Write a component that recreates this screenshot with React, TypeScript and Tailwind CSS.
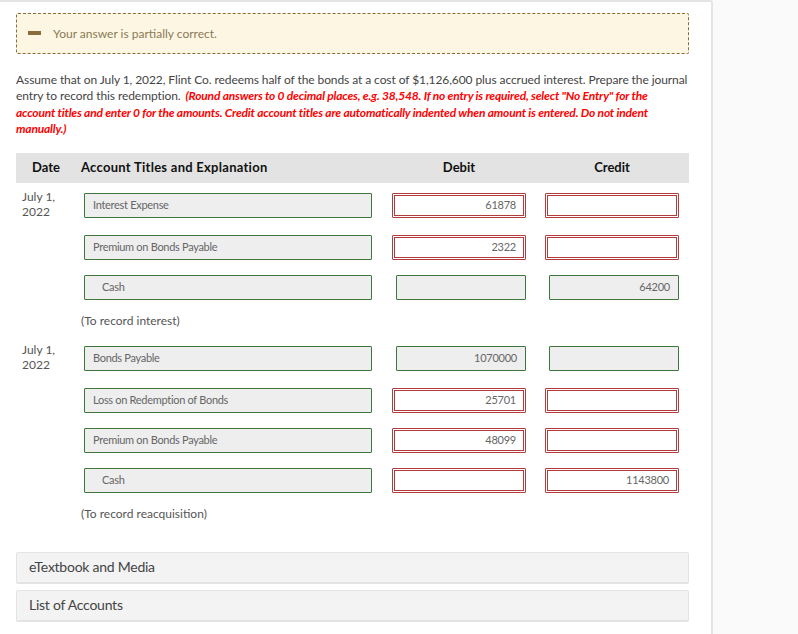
// Journal entry answer review for a partially correct question.
const lato = "font-['Lato','Noto_Sans',sans-serif]"

type Cell = { value?: string; state: 'ok' | 'bad' }

interface Row {
  date?: boolean
  account: string
  indent?: boolean
  debit: Cell
  credit: Cell
  top: string
}

const firstEntry: Row[] = [
  { date: true, account: 'Interest Expense', debit: { value: '61878', state: 'bad' }, credit: { state: 'bad' }, top: 'mt-[10px]' },
  { account: 'Premium on Bonds Payable', debit: { value: '2322', state: 'bad' }, credit: { state: 'bad' }, top: 'mt-[17px]' },
  { account: 'Cash', indent: true, debit: { state: 'ok' }, credit: { value: '64200', state: 'ok' }, top: 'mt-[15px]' },
]

const secondEntry: Row[] = [
  { date: true, account: 'Bonds Payable', debit: { value: '1070000', state: 'ok' }, credit: { state: 'ok' }, top: 'mt-[18px]' },
  { account: 'Loss on Redemption of Bonds', debit: { value: '25701', state: 'bad' }, credit: { state: 'bad' }, top: 'mt-[17px]' },
  { account: 'Premium on Bonds Payable', debit: { value: '48099', state: 'bad' }, credit: { state: 'bad' }, top: 'mt-[15px]' },
  { account: 'Cash', indent: true, debit: { state: 'bad' }, credit: { value: '1143800', state: 'bad' }, top: 'mt-[15px]' },
]

function Amount({ cell }: { cell: Cell }) {
  if (cell.state === 'bad') {
    return (
      <div className="flex h-[25px] w-[134px] items-center justify-end rounded-[1px] border-[3px] border-double border-[#b23c3c] bg-white pr-[7px] text-[11px] tracking-[-0.25px] text-[#666]">
        {cell.value}
      </div>
    )
  }
  return (
    <div className="ml-1 flex h-[25px] w-[130px] items-center justify-end rounded-[1px] border border-[#3c763d] bg-[#eeeeee] pr-2 text-[11px] tracking-[-0.25px] text-[#666]">
      {cell.value}
    </div>
  )
}

function EntryRow({ row }: { row: Row }) {
  return (
    <div className={`flex items-start ${row.top}`}>
      <div className="h-[25px] w-[68px] pl-[6px] text-[12px] leading-[15px] text-[#555]">
        {row.date && (
          <div className="-mt-[4px]">
            July 1,
            <br />
            2022
          </div>
        )}
      </div>
      <div
        className={`flex h-[25px] w-[288px] items-center rounded-[1px] border border-[#3c763d] bg-[#eeeeee] text-[11px] tracking-[-0.3px] text-[#666] ${
          row.indent ? 'pl-[17px]' : 'pl-2'
        }`}
      >
        {row.account}
      </div>
      <div className="ml-5">
        <Amount cell={row.debit} />
      </div>
      <div className="ml-[19px]">
        <Amount cell={row.credit} />
      </div>
    </div>
  )
}

function Collapsed({ label, top }: { label: string; top: string }) {
  return (
    <div className={`flex h-8 items-center rounded-[2px] border border-b-2 border-[#e3e3e3] bg-[#f3f3f3] pb-[2px] pl-3 text-[14px] tracking-[-0.25px] text-[#444] ${top}`}>
      {label}
    </div>
  )
}

export default function App() {
  return (
    <div className={`flex h-[634px] w-[798px] overflow-hidden bg-[#fafafa] ${lato}`}>
      <div className="h-[634px] w-[713px] rounded-tr-[3px] border-r-2 border-t-2 border-[#e4e4e4] bg-white pl-4 pr-[22px] pt-[11px]">
        <div className="flex h-[41px] w-[673px] items-center rounded-[2px] border border-dashed border-[#8a6d3b] bg-[#fdf6e3] pl-[11px] text-[12px] text-[#8a7a55]">
          <span className="-mt-[2px] h-[4px] w-[13px] bg-[#8a6d3b]" />
          <span className="ml-3">Your answer is partially correct.</span>
        </div>

        <p className="mt-[18px] w-[673px] text-[12px] leading-[16.25px] tracking-[-0.083px] text-[#444]">
          Assume that on July 1, 2022, Flint Co. redeems half of the bonds at a cost of $1,126,600 plus accrued interest. Prepare the journal
          <br />
          entry to record this redemption.{' '}
          <em className="ml-[2px] font-bold tracking-[-0.19px] text-[#ff0000]">
            (Round answers to 0 decimal places, e.g. 38,548. If no entry is required, select "No Entry" for the
            <br />
            account titles and enter 0 for the amounts. Credit account titles are automatically indented when amount is entered. Do not indent
            <br />
            manually.)
          </em>
        </p>

        <div className="mt-[16px] flex h-[30px] w-[673px] items-center bg-[#e3e3e3] text-[13px] font-bold text-[#111]">
          <div className="w-[65px] pl-4">Date</div>
          <div className="w-[311px] tracking-[0.27px]">Account Titles and Explanation</div>
          <div className="w-[134px] text-center">Debit</div>
          <div className="ml-[19px] w-[134px] text-center">Credit</div>
        </div>

        {firstEntry.map((row) => (
          <EntryRow key={row.account} row={row} />
        ))}
        <div className="mt-[13px] pl-[65px] text-[12px] leading-[15px] text-[#555]">(To record interest)</div>

        {secondEntry.map((row) => (
          <EntryRow key={row.account + row.debit.value} row={row} />
        ))}
        <div className="mt-[13px] pl-[65px] text-[12px] leading-[15px] text-[#555]">(To record reacquisition)</div>

        <Collapsed label="eTextbook and Media" top="mt-[31px]" />
        <Collapsed label="List of Accounts" top="mt-[6px]" />
      </div>
    </div>
  )
}
